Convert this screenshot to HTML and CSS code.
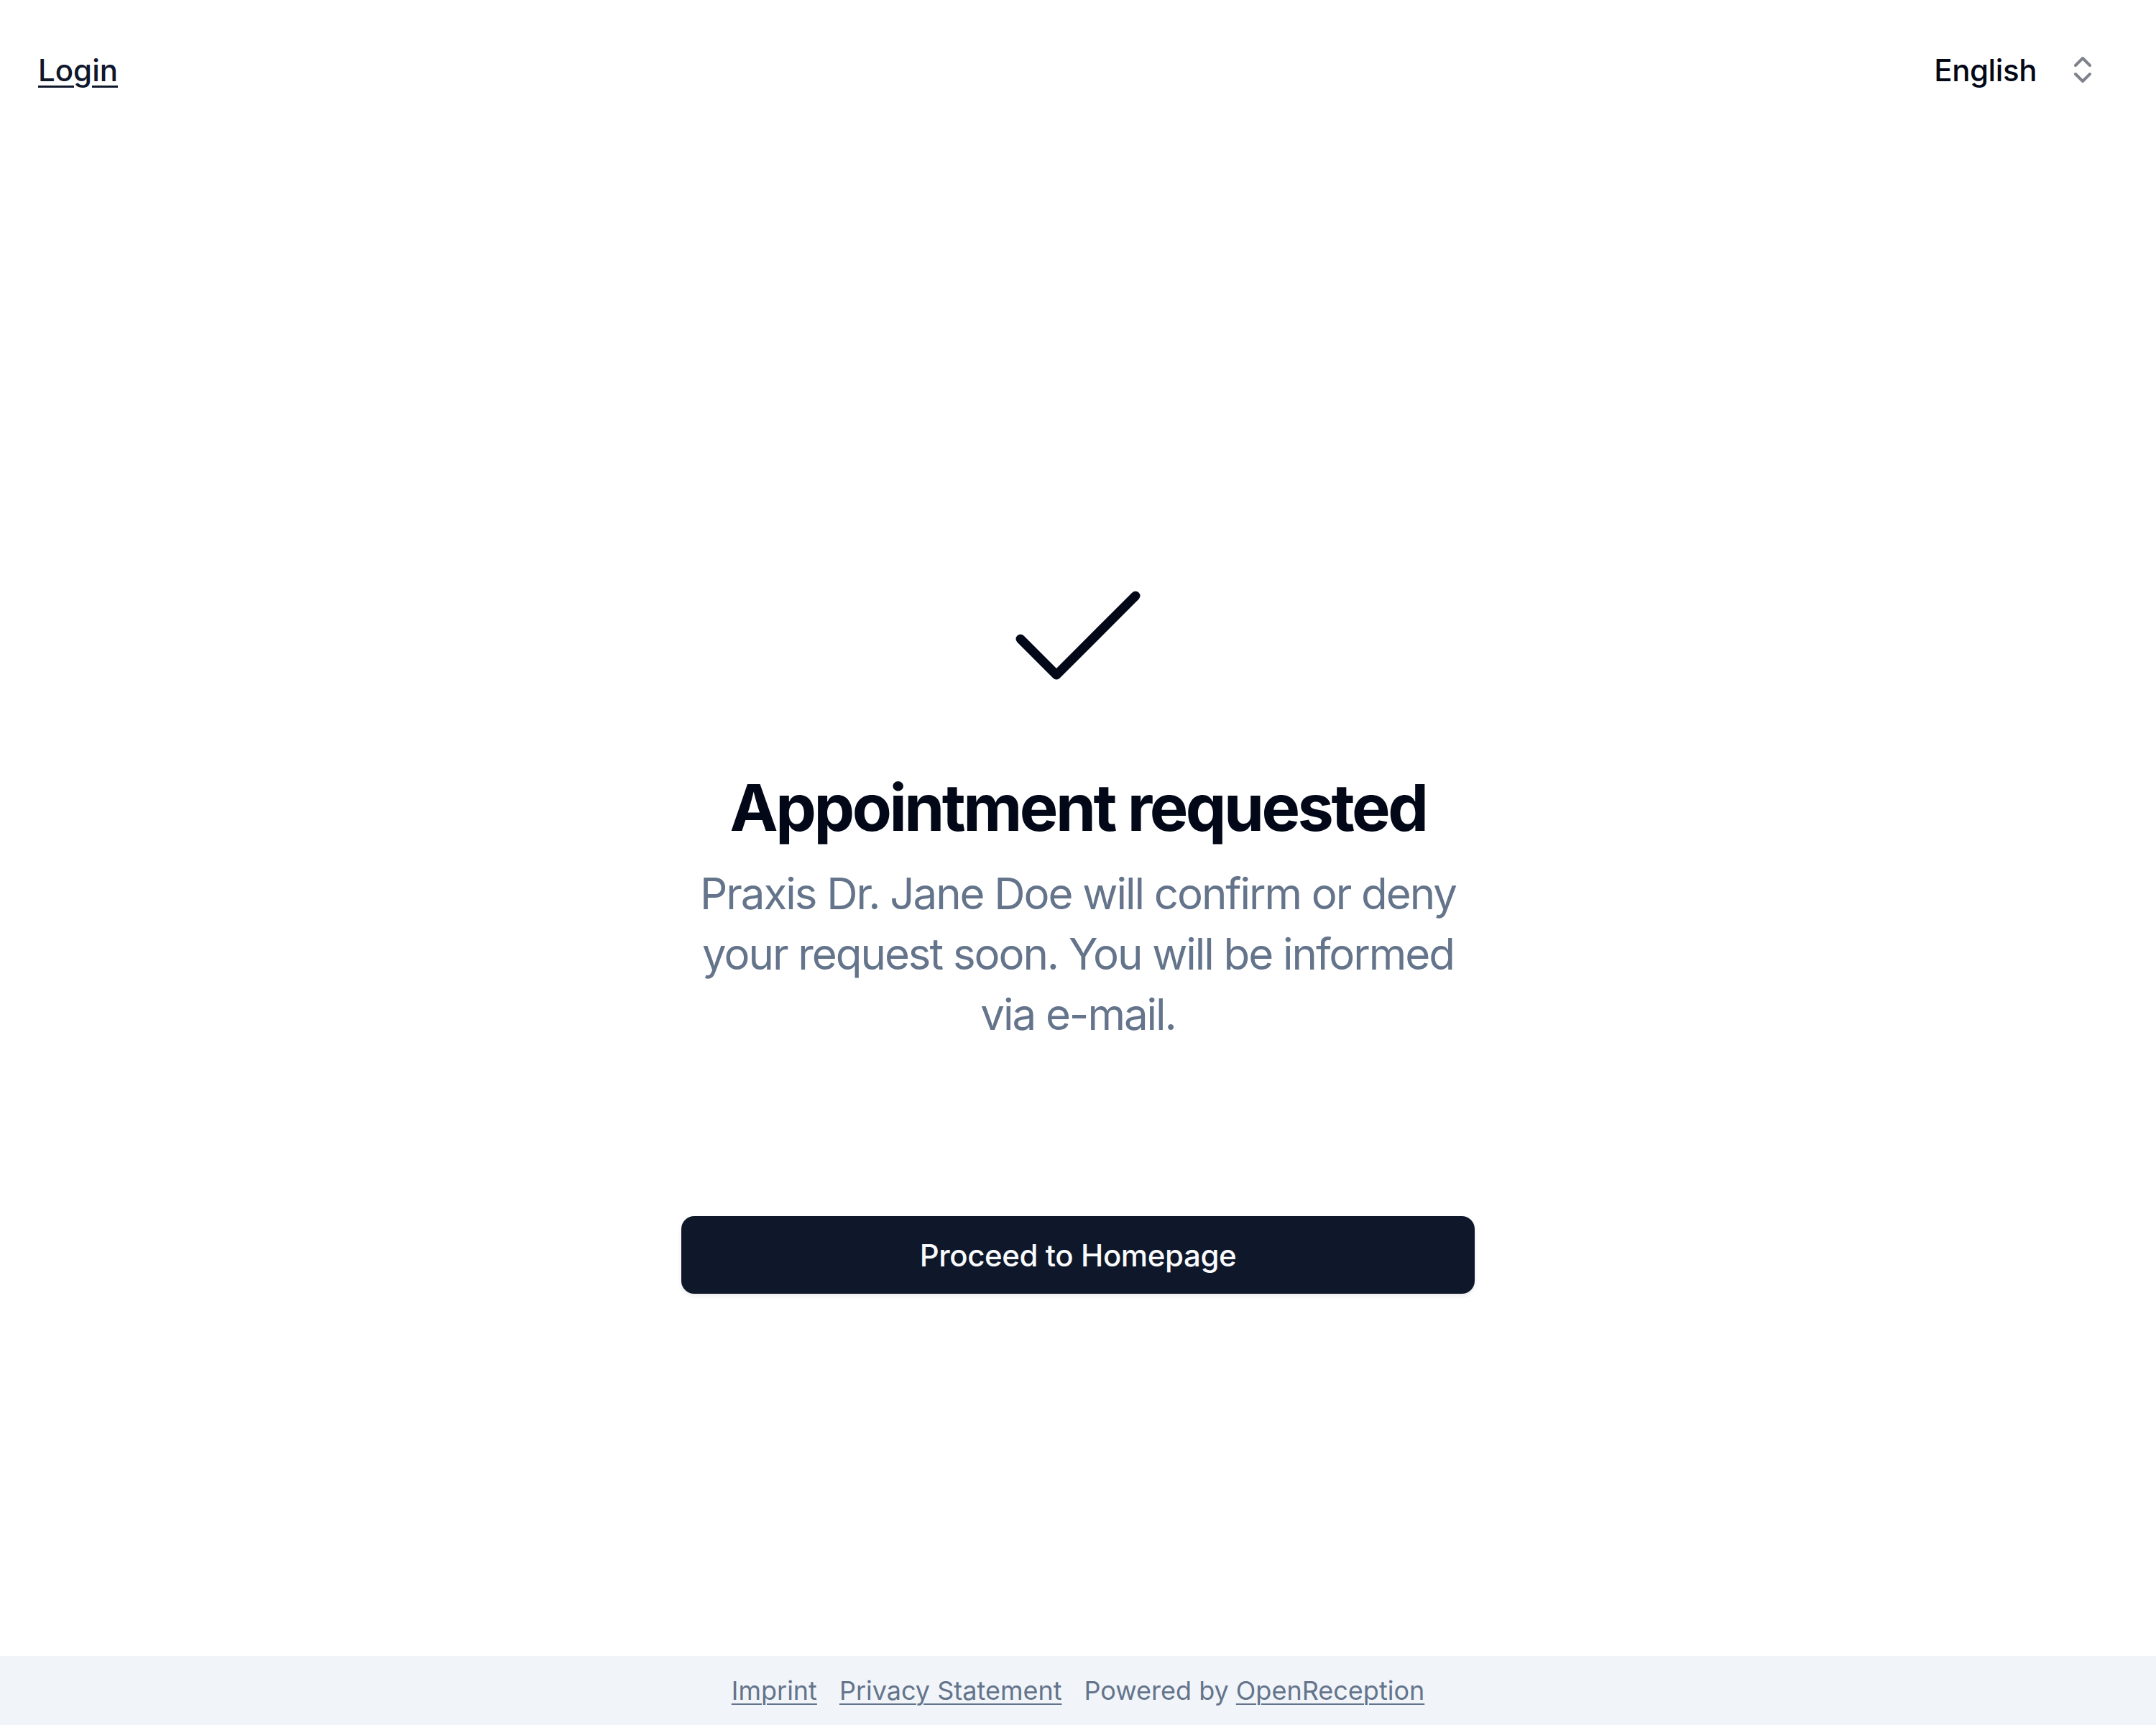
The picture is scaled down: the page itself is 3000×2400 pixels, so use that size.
FILE: index.html
```html
<!DOCTYPE html>
<html lang="en">
<head>
  <meta charset="UTF-8" />
  <meta name="viewport" content="width=device-width, initial-scale=1.0" />
  <title>Appointment requested</title>
  <link rel="stylesheet" href="styles.css">
</head>
<body>
  <header class="topbar">
    <a class="login" href="#">Login</a>
    <button class="lang" type="button">
      <span>English</span>
      <svg class="lang-icon" viewBox="0 0 24 24" fill="none" stroke="currentColor" stroke-width="2" stroke-linecap="round" stroke-linejoin="round">
        <path d="m7 15 5 5 5-5" />
        <path d="m7 9 5-5 5 5" />
      </svg>
    </button>
  </header>

  <main class="content">
    <svg class="check" viewBox="0 0 24 24" fill="none" stroke="currentColor" stroke-width="1.3" stroke-linecap="round" stroke-linejoin="round">
      <path d="M20 6 9 17l-5-5" />
    </svg>
    <h1>Appointment requested</h1>
    <p class="note">Praxis Dr. Jane Doe will confirm or deny your request soon. You will be informed via e-mail.</p>
    <a class="proceed" href="#">Proceed to Homepage</a>
  </main>

  <footer class="footer">
    <a href="#">Imprint</a>
    <a href="#">Privacy Statement</a>
    <span>Powered by <a href="#">OpenReception</a></span>
  </footer>
</body>
</html>
```

FILE: styles.css
```css
html, body {
  margin: 0;
  padding: 0;
}
body {
  font-family: Inter, 'Noto Sans', sans-serif;
  background: #ffffff;
  color: #020817;
  min-height: 100vh;
  display: flex;
  flex-direction: column;
}
.topbar {
  height: 194px;
  display: flex;
  align-items: center;
  justify-content: space-between;
  padding: 0 78px 0 53px;
}
.login {
  font-size: 42px;
  font-weight: 500;
  color: #0f172a;
  text-decoration: underline;
  text-underline-offset: 6px;
  text-decoration-thickness: 3px;
}
.lang {
  display: flex;
  align-items: center;
  gap: 40px;
  background: none;
  border: none;
  padding: 0;
  font-family: inherit;
  font-size: 42px;
  font-weight: 500;
  letter-spacing: -0.01em;
  color: #020817;
  cursor: pointer;
}
.lang-icon {
  width: 48px;
  height: 48px;
  color: #020817;
  opacity: 0.5;
}
.content {
  flex: 1;
  display: flex;
  flex-direction: column;
  align-items: center;
  padding-top: 575px;
}
.check {
  width: 240px;
  height: 240px;
  color: #020817;
}
h1 {
  margin: 61px 0 0;
  font-size: 90px;
  line-height: 108px;
  font-weight: 700;
  letter-spacing: -0.039em;
  color: #020817;
}
.note {
  margin: 23px 0 0;
  max-width: 1104px;
  text-align: center;
  font-size: 60px;
  line-height: 84px;
  letter-spacing: -0.034em;
  color: #64748b;
}
.proceed {
  margin-top: 239px;
  width: 1104px;
  height: 108px;
  border-radius: 18px;
  background: #0f172a;
  color: #f8fafc;
  font-size: 42px;
  font-weight: 500;
  letter-spacing: -0.01em;
  text-decoration: none;
  display: flex;
  align-items: center;
  justify-content: center;
  box-shadow: 0 3px 6px rgba(0, 0, 0, 0.08);
}
.footer {
  height: 96px;
  background: #f1f5f9;
  display: flex;
  align-items: center;
  justify-content: center;
  gap: 31px;
  font-size: 36px;
  color: #64748b;
}
.footer a {
  color: #64748b;
  text-decoration: underline;
  text-underline-offset: 5px;
  text-decoration-thickness: 2px;
}
```
